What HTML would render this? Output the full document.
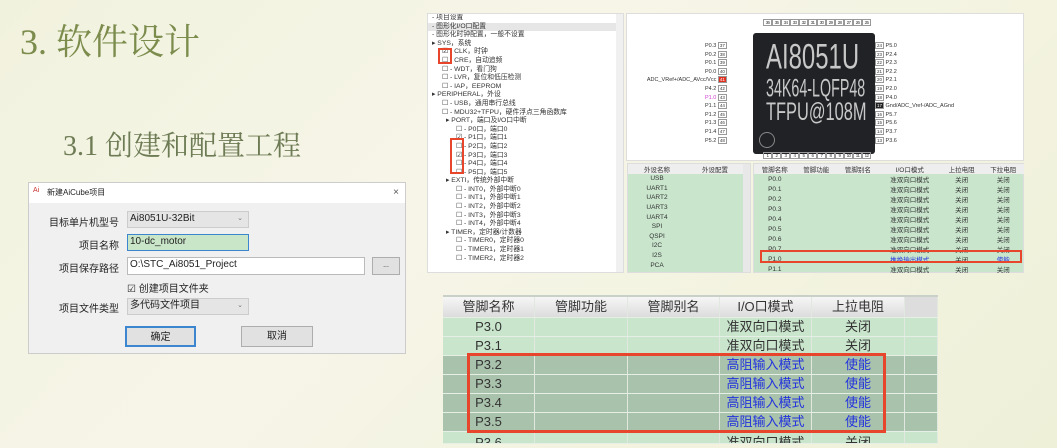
<!DOCTYPE html>
<html><head><meta charset="utf-8"><style>
*{margin:0;padding:0;box-sizing:border-box}
body{width:1057px;height:448px;overflow:hidden;position:relative;background:linear-gradient(135deg,#f1f2de 0%,#f6f5e8 40%,#f3f3e0 70%,#eef0d8 100%);font-family:"Liberation Sans","Noto Sans CJK SC",sans-serif}
.a{position:absolute}
.t1{left:20px;top:14px;font:36px "Liberation Serif","Noto Serif CJK SC",serif;color:#7b8c4c}
.t2{left:63px;top:124px;font:28px "Liberation Serif","Noto Serif CJK SC",serif;color:#6e7c55}
.dlg{left:28px;top:182px;width:378px;height:172px;background:#f0f0f0;border:1px solid #ccc}
.dlg .bar{height:20px;background:#fff;font-size:8px;line-height:20px;padding-left:18px;color:#222}
.lbl{font-size:10px;color:#222;text-align:right;width:90px;left:0}
.box{background:#fff;border:1px solid #bbb;font-size:10px;padding-left:2px;color:#222;line-height:14px}
.btn{background:#e1e1e1;border:1px solid #adadad;font-size:10px;text-align:center;line-height:19px;color:#222}
.tree{left:427px;top:13px;width:197px;height:260px;background:#fff;border:1px solid #ddd;font-size:6.8px;color:#333;line-height:8.6px;overflow:hidden}
.tree div{white-space:nowrap}
.chipp{left:626px;top:13px;width:398px;height:148px;background:#fff;border:1px solid #ddd;overflow:hidden}
.pin{position:absolute;font-size:5.5px;color:#333;white-space:nowrap}
.pb{display:inline-block;width:9px;height:7px;border:1px solid #999;font-size:4.5px;text-align:center;line-height:6px;vertical-align:middle}
table{border-collapse:collapse}
.st td{font-size:6.5px;height:9.6px;text-align:center;color:#333;padding:0}
.bt{left:443px;top:295px;width:495px;border-top:2px solid #c8d0c8}
.r{display:flex;height:19px;border-bottom:1px solid #e6efe6;overflow:hidden}
.r div{font-size:13px;line-height:18px;text-align:center;color:#333;border-right:1px solid #e0e8e0;flex:none}
.c1,.c3,.c4{width:92px}.c2,.c5{width:93px}.c6{width:33px}
.h{height:21px;background:linear-gradient(#f6f6f6,#dcdcdc)}
.h div{line-height:20px}
.g{background:#c9e6cd}.d{background:#a9c2ab}.bl{color:#2233dd!important}
.red{border:3px solid #e8462c;position:absolute}
.chipt{position:absolute;color:#c8c8c8;font-family:"Liberation Sans",sans-serif;white-space:nowrap;transform-origin:0 0;line-height:1}
</style></head><body>
<div class="a t1">3. 软件设计</div>
<div class="a t2">3.1 创建和配置工程</div>

<div class="a dlg">
 <div class="bar"><span style="position:absolute;left:4px;top:4px;color:#c33;font-size:7px;line-height:7px">Ai</span>新建AiCube项目<span style="position:absolute;right:6px;font-size:10px;color:#555">×</span></div>
 <div class="a lbl" style="top:31px">目标单片机型号</div>
 <div class="a box" style="left:98px;top:28px;width:122px;height:17px;border-color:#ccc;background:#e5e5e5">Ai8051U-32Bit<span style="float:right;margin-right:5px;font-size:7px;color:#777">⌄</span></div>
 <div class="a lbl" style="top:54px">项目名称</div>
 <div class="a box" style="left:98px;top:51px;width:122px;height:17px;background:#c9e6c9;border-color:#3c86d0">10-dc_motor</div>
 <div class="a lbl" style="top:77px">项目保存路径</div>
 <div class="a box" style="left:98px;top:74px;width:238px;height:18px">O:\STC_Ai8051_Project</div>
 <div class="a btn" style="left:343px;top:74px;width:28px;height:18px;font-size:7px;line-height:16px">...</div>
 <div class="a" style="left:98px;top:97px;font-size:10px;color:#222">☑ 创建项目文件夹</div>
 <div class="a lbl" style="top:117px">项目文件类型</div>
 <div class="a box" style="left:98px;top:115px;width:122px;height:17px;border-color:#ccc;background:#e5e5e5">多代码文件项目<span style="float:right;margin-right:5px;font-size:7px;color:#777">⌄</span></div>
 <div class="a btn" style="left:96px;top:143px;width:71px;height:21px;border:2px solid #3c86d0">确定</div>
 <div class="a btn" style="left:212px;top:143px;width:72px;height:21px">取消</div>
</div>

<div class="a tree">
<div style="padding-left:4px">- 项目设置</div>
<div style="padding-left:4px;background:#e6e6e6">- 图形化I/O口配置</div>
<div style="padding-left:4px">- 图形化时钟配置，一般不设置</div>
<div style="padding-left:4px">▸ SYS，系统</div>
<div style="padding-left:14px">☑ - CLK，时钟</div>
<div style="padding-left:14px">☐ - CRE，自动追频</div>
<div style="padding-left:14px">☐ - WDT，看门狗</div>
<div style="padding-left:14px">☐ - LVR，复位和低压检测</div>
<div style="padding-left:14px">☐ - IAP，EEPROM</div>
<div style="padding-left:4px">▸ PERIPHERAL，外设</div>
<div style="padding-left:14px">☐ - USB，通用串行总线</div>
<div style="padding-left:14px">☐ - MDU32+TFPU，硬件浮点三角函数库</div>
<div style="padding-left:18px">▸ PORT，端口及I/O口中断</div>
<div style="padding-left:28px">☐ - P0口，端口0</div>
<div style="padding-left:28px">☑ - P1口，端口1</div>
<div style="padding-left:28px">☐ - P2口，端口2</div>
<div style="padding-left:28px">☑ - P3口，端口3</div>
<div style="padding-left:28px">☐ - P4口，端口4</div>
<div style="padding-left:28px">☐ - P5口，端口5</div>
<div style="padding-left:18px">▸ EXTI，传统外部中断</div>
<div style="padding-left:28px">☐ - INT0，外部中断0</div>
<div style="padding-left:28px">☐ - INT1，外部中断1</div>
<div style="padding-left:28px">☐ - INT2，外部中断2</div>
<div style="padding-left:28px">☐ - INT3，外部中断3</div>
<div style="padding-left:28px">☐ - INT4，外部中断4</div>
<div style="padding-left:18px">▸ TIMER，定时器/计数器</div>
<div style="padding-left:28px">☐ - TIMER0，定时器0</div>
<div style="padding-left:28px">☐ - TIMER1，定时器1</div>
<div style="padding-left:28px">☐ - TIMER2，定时器2</div>
<div class="a" style="right:0;top:0;width:7px;height:260px;background:#f0f0f0"></div>
</div>
<div class="red" style="left:438px;top:48px;width:14px;height:16px;border-width:2px"></div>
<div class="red" style="left:450px;top:138px;width:14px;height:36px;border-width:2px"></div>

<div class="a chipp">
 <div class="a" style="left:126px;top:19px;width:122px;height:121px;background:#202226;border-radius:3px"></div>
 <div class="chipt" style="left:139px;top:25px;font-size:26px;transform:scale(0.92,1.35)">AI8051U</div>
 <div class="chipt" style="left:139px;top:62px;font-size:17px;transform:scale(0.84,1.45)">34K64-LQFP48</div>
 <div class="chipt" style="left:139px;top:86px;font-size:20px;transform:scale(0.82,1.25)">TFPU@108M</div>
 <div class="a" style="left:132px;top:118px;width:16px;height:16px;border-radius:50%;border:1px solid #888"></div>
 <div class="pin" style="left:78px;top:28px;line-height:8.6px;text-align:right">P0.3 <span class="pb">37</span><br>P0.2 <span class="pb">38</span><br>P0.1 <span class="pb">39</span><br>P0.0 <span class="pb">40</span><br><span style="margin-left:-76px">ADC_VRef+/ADC_AVcc/Vcc</span> <span class="pb" style="background:#e03020;color:#fff">41</span><br>P4.2 <span class="pb">42</span><br><span style="color:#d040d0">P1.0</span> <span class="pb">43</span><br>P1.1 <span class="pb">44</span><br>P1.2 <span class="pb">45</span><br>P1.3 <span class="pb">46</span><br>P1.4 <span class="pb">47</span><br>P5.2 <span class="pb">48</span></div>
 <div class="pin" style="left:248px;top:28px;line-height:8.6px"><span class="pb">24</span> P5.0<br><span class="pb">23</span> P2.4<br><span class="pb">22</span> P2.3<br><span class="pb">21</span> P2.2<br><span class="pb">20</span> P2.1<br><span class="pb">19</span> P2.0<br><span class="pb">18</span> P4.0<br><span class="pb" style="background:#222;color:#fff">17</span> Gnd/ADC_Vref-/ADC_AGnd<br><span class="pb">16</span> P5.7<br><span class="pb">15</span> P5.6<br><span class="pb">14</span> P3.7<br><span class="pb">13</span> P3.6</div>
 <div class="pin" style="left:136px;top:5px;letter-spacing:-0.6px"><span class="pb">36</span><span class="pb">35</span><span class="pb">34</span><span class="pb">33</span><span class="pb">32</span><span class="pb">31</span><span class="pb">30</span><span class="pb">29</span><span class="pb">28</span><span class="pb">27</span><span class="pb">26</span><span class="pb">25</span></div>
 <div class="pin" style="left:136px;top:138px;letter-spacing:-0.6px"><span class="pb">1</span><span class="pb">2</span><span class="pb">3</span><span class="pb">4</span><span class="pb">5</span><span class="pb">6</span><span class="pb">7</span><span class="pb">8</span><span class="pb">9</span><span class="pb">10</span><span class="pb">11</span><span class="pb">12</span></div>
</div>

<div class="a" style="left:627px;top:163px;width:124px;height:110px;background:#c9e6cd;border:1px solid #ddd">
<table class="st" style="width:116px"><tr style="background:#eee"><td>外设名称</td><td>外设配置</td></tr>
<tr><td>USB</td><td></td></tr><tr><td>UART1</td><td></td></tr><tr><td>UART2</td><td></td></tr><tr><td>UART3</td><td></td></tr><tr><td>UART4</td><td></td></tr><tr><td>SPI</td><td></td></tr><tr><td>QSPI</td><td></td></tr><tr><td>I2C</td><td></td></tr><tr><td>I2S</td><td></td></tr><tr><td>PCA</td><td></td></tr></table>
<div class="a" style="right:0;top:0;width:7px;height:108px;background:#e8e8e8"></div>
</div>
<div class="a" style="left:753px;top:163px;width:271px;height:110px;background:#c9e6cd;border:1px solid #ddd">
<table class="st" style="width:270px"><tr style="background:#eee"><td>管脚名称</td><td>管脚功能</td><td>管脚别名</td><td>I/O口模式</td><td>上拉电阻</td><td>下拉电阻</td></tr>
<tr><td>P0.0</td><td></td><td></td><td>准双向口模式</td><td>关闭</td><td>关闭</td></tr>
<tr><td>P0.1</td><td></td><td></td><td>准双向口模式</td><td>关闭</td><td>关闭</td></tr>
<tr><td>P0.2</td><td></td><td></td><td>准双向口模式</td><td>关闭</td><td>关闭</td></tr>
<tr><td>P0.3</td><td></td><td></td><td>准双向口模式</td><td>关闭</td><td>关闭</td></tr>
<tr><td>P0.4</td><td></td><td></td><td>准双向口模式</td><td>关闭</td><td>关闭</td></tr>
<tr><td>P0.5</td><td></td><td></td><td>准双向口模式</td><td>关闭</td><td>关闭</td></tr>
<tr><td>P0.6</td><td></td><td></td><td>准双向口模式</td><td>关闭</td><td>关闭</td></tr>
<tr><td>P0.7</td><td></td><td></td><td>准双向口模式</td><td>关闭</td><td>关闭</td></tr>
<tr><td>P1.0</td><td></td><td></td><td class="bl">推挽输出模式</td><td>关闭</td><td class="bl">使能</td></tr>
<tr><td>P1.1</td><td></td><td></td><td>准双向口模式</td><td>关闭</td><td>关闭</td></tr></table>
</div>
<div class="red" style="left:760px;top:250px;width:262px;height:13px;border-width:2px"></div>

<div class="a bt">
<div class="r h"><div class="c1">管脚名称</div><div class="c2">管脚功能</div><div class="c3">管脚别名</div><div class="c4">I/O口模式</div><div class="c5">上拉电阻</div><div class="c6" style="background:#ddd"></div></div>
<div class="r g"><div class="c1">P3.0</div><div class="c2"></div><div class="c3"></div><div class="c4">准双向口模式</div><div class="c5">关闭</div><div class="c6"></div></div>
<div class="r g"><div class="c1">P3.1</div><div class="c2"></div><div class="c3"></div><div class="c4">准双向口模式</div><div class="c5">关闭</div><div class="c6"></div></div>
<div class="r d"><div class="c1">P3.2</div><div class="c2"></div><div class="c3"></div><div class="c4 bl">高阻输入模式</div><div class="c5 bl">使能</div><div class="c6"></div></div>
<div class="r d"><div class="c1">P3.3</div><div class="c2"></div><div class="c3"></div><div class="c4 bl">高阻输入模式</div><div class="c5 bl">使能</div><div class="c6"></div></div>
<div class="r d"><div class="c1">P3.4</div><div class="c2"></div><div class="c3"></div><div class="c4 bl">高阻输入模式</div><div class="c5 bl">使能</div><div class="c6"></div></div>
<div class="r d"><div class="c1">P3.5</div><div class="c2"></div><div class="c3"></div><div class="c4 bl">高阻输入模式</div><div class="c5 bl">使能</div><div class="c6"></div></div>
<div class="r g" style="height:12px"><div class="c1" style="line-height:22px">P3.6</div><div class="c2"></div><div class="c3"></div><div class="c4" style="line-height:22px">准双向口模式</div><div class="c5" style="line-height:22px">关闭</div><div class="c6"></div></div>
</div>
<div class="red" style="left:467px;top:353px;width:419px;height:80px"></div>
</body></html>
